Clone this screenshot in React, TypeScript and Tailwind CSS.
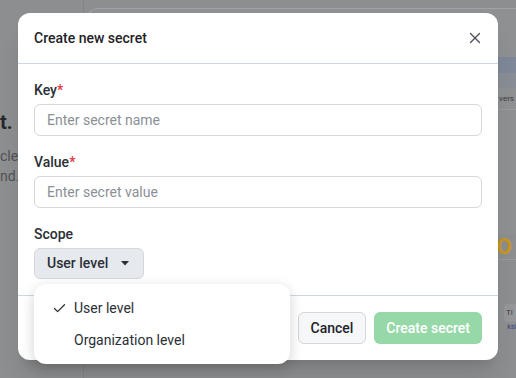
import { X, Check } from 'lucide-react'

const FONT = { fontFamily: 'Roboto, "Noto Sans", Arial, sans-serif' }

function Field({ label, placeholder }: { label: string; placeholder: string }) {
  return (
    <div className="flex flex-col">
      <label className="mb-1 h-5 text-[14px] font-medium leading-5 text-[#2b2f36]">
        {label}
        <span className="text-[#e5343a]">*</span>
      </label>
      <input
        className="h-8 w-full rounded-md border border-[#d4d7dc] bg-white px-3 text-[14px] text-[#2b2f36] outline-none placeholder:text-[#8b8f96]"
        placeholder={placeholder}
      />
    </div>
  )
}

export default function App() {
  return (
    <div className="relative h-[378px] w-[516px] overflow-hidden bg-[#8d8e90]" style={FONT}>
      {/* page behind the overlay */}
      <div className="flex h-full">
        <div className="flex w-[84px] flex-col border-r border-[#838486]">
          <div className="mt-[110px] flex flex-col whitespace-nowrap">
            <span className="text-[20px] font-bold leading-6 text-[#26282c]">t.</span>
            <span className="mt-[12px] text-[14px] leading-5 text-[#505256]">clear</span>
            <span className="text-[14px] leading-5 text-[#505256]">nd.</span>
          </div>
        </div>
        <div className="flex flex-1 flex-col pl-[2px] pt-[8px]">
          <div className="flex h-[226px] flex-col rounded-tl-xl border-l border-t border-[#a2a3a6] bg-[#8f9092]">
            <div className="h-[48px]" />
            <div className="h-[16px] bg-[#7e8898]" />
            <div className="h-[15px] bg-[#898e95]" />
            <div className="flex h-[22px] items-center justify-end border-b border-[#9a9b9e] pr-[2px] text-[8px] text-[#3b3d40]">
              d vers
            </div>
          </div>
          <div className="flex h-[26px] items-center justify-end border-b border-[#9a9b9e] pr-[4px]">
            <span className="text-[22px] font-bold leading-none text-[#b03a2e]">o</span>
            <span className="text-[22px] font-bold leading-none text-[#c6961f]">O</span>
          </div>
          <div className="mt-[44px] flex justify-end">
            <div className="flex h-[18px] w-[12px] items-center rounded-l-sm bg-[#96979a] pl-[2px] text-[8px] text-[#3b3d40]">
              Ti
            </div>
          </div>
          <div className="flex justify-end text-[7px] text-[#3b3f7a]">ksi</div>
        </div>
      </div>

      {/* modal */}
      <div className="absolute left-[18px] top-[13px] w-[480px] rounded-xl bg-white shadow-xl">
        <div className="flex h-[51px] items-center justify-between border-b border-[#cfd8e2] pl-4 pr-[14px]">
          <h2 className="text-[14px] font-medium text-[#1f2328]">Create new secret</h2>
          <X size={18} strokeWidth={1.8} className="text-[#4b5058]" />
        </div>

        <div className="relative flex flex-col gap-4 px-4 pb-4 pt-4">
          <Field label="Key" placeholder="Enter secret name" />
          <Field label="Value" placeholder="Enter secret value" />
          <div className="flex flex-col">
            <label className="mb-1 h-5 text-[14px] font-medium leading-5 text-[#2b2f36]">Scope</label>
            <button className="flex h-[31px] w-[110px] items-center gap-[13px] rounded-md border border-[#d4d7dc] bg-[#e6e9ee] pl-3 text-[14px] font-medium text-[#2b2f36]">
              User level
              <svg width="8" height="5" viewBox="0 0 8 5">
                <path d="M0 0h8L4 4.5z" fill="#2b2f36" />
              </svg>
            </button>
          </div>

          {/* open scope menu */}
          <div className="absolute left-4 top-[220px] z-10 flex w-[256px] flex-col rounded-xl bg-white py-2 shadow-[0_4px_14px_rgba(0,0,0,0.18)]">
            <div className="flex h-8 items-center pl-[18px] text-[14px] text-[#2b2f36]">
              <Check size={15} strokeWidth={2} className="mr-[7px] text-[#2b2f36]" />
              User level
            </div>
            <div className="flex h-8 items-center pl-[40px] text-[14px] text-[#2b2f36]">Organization level</div>
          </div>
        </div>

        <div className="flex items-center justify-end gap-2 border-t border-[#cfd8e2] px-4 py-4">
          <button className="h-8 rounded-md border border-[#d4d7dc] bg-[#f6f7f9] px-3 text-[14px] font-medium text-[#1f2328]">
            Cancel
          </button>
          <button className="h-8 rounded-md bg-[#97d8a8] px-3 text-[14px] font-medium text-white">
            Create secret
          </button>
        </div>
      </div>
    </div>
  )
}
